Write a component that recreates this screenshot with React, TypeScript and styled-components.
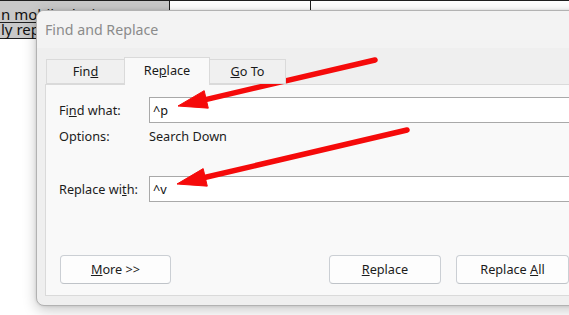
import React from "react";
import styled, { createGlobalStyle } from "styled-components";

const Global = createGlobalStyle`
  html, body { margin: 0; padding: 0; background: #ffffff; overflow: hidden; }
  body { width: 569px; height: 315px; font-family: "Noto Sans", "Open Sans", sans-serif; }
  #root { position: relative; width: 569px; height: 315px; overflow: hidden; }
`;

const Page = styled.div`
  position: relative;
  width: 569px;
  height: 315px;
  overflow: hidden;
  background: #ffffff;
`;

const DocTable = styled.div`
  display: grid;
  grid-template-columns: 170px 141px 400px;
  grid-template-rows: 22px 16px;
  border-top: 1px solid #1f1f1f;
  width: 711px;
`;

const DocCell = styled.div<{ $shaded?: boolean; $row: number }>`
  background: ${(p) => (p.$shaded ? "#c9c9c9" : "#ffffff")};
  border-right: 1px solid #1f1f1f;
  border-bottom: 1px solid #1f1f1f;
  box-sizing: border-box;
  white-space: nowrap;
  overflow: visible;
  font-family: "Noto Sans", sans-serif;
  font-size: 15px;
  color: #111;
  padding-left: 1px;
  line-height: ${(p) => (p.$row === 1 ? "26px" : "12px")};
`;

const Dialog = styled.div`
  position: absolute;
  left: 36px;
  top: 10px;
  width: 560px;
  height: 296px;
  box-sizing: border-box;
  border: 1px solid #b2b2b2;
  border-radius: 8px;
  background: #efefef;
  box-shadow: 0 4px 14px rgba(0, 0, 0, 0.22), 0 0 3px rgba(0, 0, 0, 0.12);
  overflow: hidden;
  display: flex;
  flex-direction: column;
`;

const TitleBar = styled.div`
  height: 37px;
  flex: none;
  background: #f3f3f3;
  display: flex;
  align-items: center;
  padding-left: 8px;
  font-size: 14.2px;
  color: #8b8b8b;
  box-sizing: border-box;
`;

const DialogBody = styled.div`
  flex: 1;
  padding: 0 0 0 8px;
  display: flex;
  flex-direction: column;
`;

const TabStrip = styled.div`
  height: 36px;
  display: flex;
  align-items: flex-end;
  padding-left: 1px;
  position: relative;
  z-index: 1;
`;

const Tab = styled.div<{ $active?: boolean; $w: number }>`
  width: ${(p) => p.$w}px;
  height: ${(p) => (p.$active ? 28 : 25)}px;
  box-sizing: border-box;
  border: 1px solid #dadada;
  border-bottom: ${(p) => (p.$active ? "none" : "1px solid #dadada")};
  background: ${(p) => (p.$active ? "#f9f9f9" : "#f0f0f0")};
  margin-bottom: ${(p) => (p.$active ? "-1px" : "0")};
  display: flex;
  align-items: center;
  justify-content: center;
  font-size: 12.7px;
  color: #1a1a1a;
  padding-bottom: ${(p) => (p.$active ? "3px" : "1px")};
  & + & { margin-left: -1px; }
`;

const TabPanel = styled.div`
  height: 212px;
  box-sizing: border-box;
  border: 1px solid #dadada;
  border-right: none;
  background: #f9f9f9;
  padding: 12px 0 0 13px;
  display: flex;
  flex-direction: column;
`;

const FieldRow = styled.div<{ $gap: number; $h: number }>`
  display: grid;
  grid-template-columns: 90px 1fr;
  align-items: center;
  margin-top: ${(p) => p.$gap}px;
  height: ${(p) => p.$h}px;
`;

const Label = styled.span`
  font-size: 12.7px;
  color: #1c1c1c;
  white-space: nowrap;
`;

const Value = styled.span`
  font-size: 12.7px;
  color: #1c1c1c;
  white-space: nowrap;
`;

const TextBox = styled.div`
  height: 26px;
  width: 460px;
  box-sizing: border-box;
  border: 1px solid #a9a9a9;
  background: #ffffff;
  font-size: 12.7px;
  color: #111;
  display: flex;
  align-items: center;
  padding: 0 0 1px 3px;
`;

const ButtonRow = styled.div`
  display: flex;
  gap: 15px;
  margin-top: 53px;
  padding-left: 1px;
`;

const Button = styled.div<{ $push?: number; $w?: number }>`
  width: ${(p) => p.$w ?? 112}px;
  height: 29px;
  flex: none;
  box-sizing: border-box;
  border: 1px solid #cbcfd4;
  border-bottom-color: #bfc3c8;
  border-radius: 4px;
  background: #fdfdfd;
  margin-left: ${(p) => p.$push ?? 0}px;
  display: flex;
  align-items: center;
  justify-content: center;
  font-size: 12.7px;
  color: #1b1b1b;
  padding-bottom: 1px;
  white-space: nowrap;
`;

const Caption = styled.span`
  white-space: pre;
`;

const Overlay = styled.svg`
  position: absolute;
  left: 0;
  top: 0;
  width: 569px;
  height: 315px;
  pointer-events: none;
`;

type ArrowProps = { tail: [number, number]; tip: [number, number] };

function Arrow({ tail, tip }: ArrowProps) {
  const dx = tip[0] - tail[0];
  const dy = tip[1] - tail[1];
  const len = Math.hypot(dx, dy);
  const ux = dx / len;
  const uy = dy / len;
  const nx = -uy;
  const ny = ux;
  const headLen = 29;
  const half = 9;
  const bx = tip[0] - ux * headLen;
  const by = tip[1] - uy * headLen;
  const lx = tip[0] - ux * (headLen - 4);
  const ly = tip[1] - uy * (headLen - 4);
  const pts = [
    `${tip[0]},${tip[1]}`,
    `${bx + nx * half},${by + ny * half}`,
    `${bx - nx * half},${by - ny * half}`,
  ].join(" ");
  return (
    <g>
      <line x1={tail[0]} y1={tail[1]} x2={lx} y2={ly} stroke="#f50a0a" strokeWidth={5.5} strokeLinecap="round" />
      <polygon points={pts} fill="#f50a0a" stroke="#f50a0a" strokeWidth={1} strokeLinejoin="round" />
    </g>
  );
}

export default function App() {
  return (
    <Page>
      <Global />
      <DocTable>
        <DocCell $shaded $row={1}>n mobile devices</DocCell>
        <DocCell $row={1} />
        <DocCell $row={1} />
        <DocCell $shaded $row={2}>ly replaced</DocCell>
        <DocCell $row={2} />
        <DocCell $row={2} />
      </DocTable>

      <Dialog>
        <TitleBar>Find and Replace</TitleBar>
        <DialogBody>
          <TabStrip>
            <Tab $w={79}>
              <Caption>Fin<u>d</u></Caption>
            </Tab>
            <Tab $active $w={86}>
              <Caption>Re<u>p</u>lace</Caption>
            </Tab>
            <Tab $w={77}>
              <Caption><u>G</u>o To</Caption>
            </Tab>
          </TabStrip>
          <TabPanel>
            <FieldRow $gap={0} $h={26}>
              <Label>
                Fi<u>n</u>d what:
              </Label>
              <TextBox>^p</TextBox>
            </FieldRow>
            <FieldRow $gap={4} $h={18}>
              <Label>Options:</Label>
              <Value>Search Down</Value>
            </FieldRow>
            <FieldRow $gap={31} $h={26}>
              <Label>
                Replace wi<u>t</u>h:
              </Label>
              <TextBox>^v</TextBox>
            </FieldRow>
            <ButtonRow>
              <Button $w={111}>
                <Caption><u>M</u>ore &gt;&gt;</Caption>
              </Button>
              <Button $push={143}>
                <Caption><u>R</u>eplace</Caption>
              </Button>
              <Button $w={113}>
                <Caption>Replace <u>A</u>ll</Caption>
              </Button>
            </ButtonRow>
          </TabPanel>
        </DialogBody>
      </Dialog>

      <Overlay viewBox="0 0 569 315">
        <Arrow tail={[375, 60]} tip={[178, 106]} />
        <Arrow tail={[407, 130]} tip={[177, 184]} />
      </Overlay>
    </Page>
  );
}
